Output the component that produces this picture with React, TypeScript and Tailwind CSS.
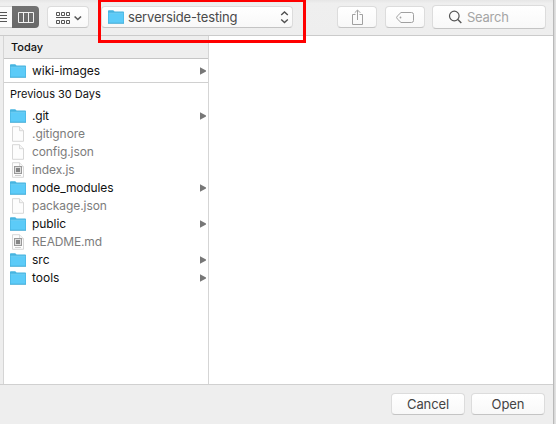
import type { ReactNode } from "react";

type Kind = "folder" | "file" | "doc";

const entries: { name: string; kind: Kind; arrow?: boolean; spacing: string }[] = [
  { name: ".git", kind: "folder", arrow: true, spacing: "tracking-[-0.2px]" },
  { name: ".gitignore", kind: "file", spacing: "tracking-[-0.05px]" },
  { name: "config.json", kind: "file", spacing: "tracking-[-0.1px]" },
  { name: "index.js", kind: "doc", spacing: "tracking-[-0.1px]" },
  { name: "node_modules", kind: "folder", arrow: true, spacing: "tracking-[-0.12px]" },
  { name: "package.json", kind: "file", spacing: "tracking-[-0.08px]" },
  { name: "public", kind: "folder", arrow: true, spacing: "tracking-[-0.08px]" },
  { name: "README.md", kind: "doc", spacing: "tracking-[-0.15px]" },
  { name: "src", kind: "folder", arrow: true, spacing: "tracking-normal" },
  { name: "tools", kind: "folder", arrow: true, spacing: "tracking-normal" },
];

function FolderIcon() {
  return (
    <svg width="16" height="14" viewBox="0 0 16 14" className="block shrink-0">
      <path d="M0 1Q0 .2 .8 .2H5.2L6.6 1.6H15.2Q16 1.6 16 2.4V13.6H0Z" fill="#46b4e0" />
      <path d="M.6 3.6H15.4V12.9H.6Z" fill="#5ccbf8" />
      <path d="M.6 3.2H15.4" stroke="#7fd8fb" strokeWidth=".8" />
      <path d="M0 13.3H16" stroke="#3da7d2" strokeWidth=".7" />
    </svg>
  );
}

function FileIcon({ doc }: { doc?: boolean }) {
  return (
    <svg width="16" height="16" viewBox="0 0 16 16" className="block shrink-0">
      <path d="M2.5 .7H9.5L13.5 4.7V15.3H2.5Z" fill="#fdfdfd" stroke="#d2d2d2" strokeWidth=".9" />
      <path d="M9.5 .7V4.7H13.5" fill="#f5f5f5" stroke="#d2d2d2" strokeWidth=".8" />
      {doc && (
        <>
          <rect x="4.5" y="4.5" width="7" height="7" fill="#dedede" stroke="#999" />
          <rect x="6" y="6" width="4" height="4" fill="#858585" />
          <path d="M5 13.5H11" stroke="#cfcfcf" />
        </>
      )}
    </svg>
  );
}

function Row({ name, kind, arrow, spacing }: { name: string; kind: Kind; arrow?: boolean; spacing: string }) {
  return (
    <div className="flex h-[18px] items-center pr-[2px] pl-[6px]">
      {kind === "folder" ? <FolderIcon /> : <FileIcon doc={kind === "doc"} />}
      <span className={`ml-[6px] flex-1 text-[12px] leading-[18px] ${spacing} ${kind === "folder" ? "text-[#111]" : "text-[#7c7c7c]"}`}>
        {name}
      </span>
      {arrow && (
        <svg width="6" height="8" viewBox="0 0 6 8" className="block">
          <path d="M0 .2L6 3.6V4.4L0 7.8Z" fill="#777" />
        </svg>
      )}
    </div>
  );
}

function Button({ className, children }: { className: string; children: ReactNode }) {
  return (
    <div
      className={`flex shrink-0 items-center rounded-[4px] border border-[#dcdcdc] border-b-[#c4c4c4] bg-linear-to-b from-white to-[#f8f8f8] ${className}`}
    >
      {children}
    </div>
  );
}

export default function App() {
  return (
    <div className="relative flex h-[424px] w-[556px] overflow-hidden bg-[#e0e0e0] font-['Inter','Liberation_Sans',sans-serif] text-[#111]">
      <div className="flex w-[553px] flex-col bg-[#eee]">
        <header className="flex h-[36px] shrink-0 items-start border-b border-[#cbcbcb] bg-linear-to-b from-[#e6e6e6] from-0% via-[#efefef] via-10% to-[#eee] pt-[6px]">
          <div className="flex h-[22px] w-[39px] overflow-hidden rounded-r-[4px]">
            <div className="flex w-[12px] items-center border-y border-[#dcdcdc] border-b-[#c4c4c4] bg-[#fbfbfb]">
              <svg width="8" height="12" viewBox="0 0 8 12">
                <path d="M0 1.5H7M0 4.5H7M0 7.5H7M0 10.5H7" stroke="#555" />
              </svg>
            </div>
            <div className="flex flex-1 items-center bg-linear-to-b from-[#727272] to-[#686868] pl-[6px]">
              <svg width="16" height="11" viewBox="0 0 16 11">
                <path d="M.5 .5H15.5V10.5H.5ZM5.5 .5V10.5M10.5 .5V10.5" fill="none" stroke="#f2f2f2" />
              </svg>
            </div>
          </div>
          <Button className="ml-[8px] h-[22px] w-[42px] pl-[8px]">
            <svg width="27" height="13" viewBox="0 0 27 13">
              <path
                d="M.5 1.5H3.5V4.5H.5ZM5.5 1.5H8.5V4.5H5.5ZM10.5 1.5H13.5V4.5H10.5ZM.5 9.5H3.5V12.5H.5ZM5.5 9.5H8.5V12.5H5.5ZM10.5 9.5H13.5V12.5H10.5ZM0 6.5H14"
                fill="none"
                stroke="#555"
              />
              <path d="M18.6 5.5L21.8 8.5L25 5.5" fill="none" stroke="#555" strokeWidth="1.6" />
            </svg>
          </Button>
          <Button className="ml-[12px] h-[22px] w-[192px] pr-[3px] pl-[6px]">
            <FolderIcon />
            <span className="ml-[4px] flex-1 pt-px text-[13px] tracking-[-0.16px] text-[#4a4a4a]">serverside-testing</span>
            <svg width="9" height="14" viewBox="0 0 9 14">
              <path d="M1.2 5L4.5 2L7.8 5M1.2 9.5L4.5 12.5L7.8 9.5" fill="none" stroke="#505050" strokeWidth="1.4" />
            </svg>
          </Button>
          <Button className="ml-[44px] h-[22px] w-[40px] justify-center">
            <svg width="13" height="17" viewBox="0 0 13 17">
              <path d="M4.5 5.5H1.5V15.5H11.5V5.5H8.5M6.5 11V1.2M3.7 3.8L6.5 1L9.3 3.8" fill="none" stroke="#a0a0a0" />
            </svg>
          </Button>
          <Button className="ml-[8px] h-[22px] w-[40px] justify-center">
            <svg width="18" height="11" viewBox="0 0 18 11">
              <path d="M5 .5H15.5Q17.5 .5 17.5 2.5V8.5Q17.5 10.5 15.5 10.5H5L1.2 6.8Q0 5.5 1.2 4.2Z" fill="none" stroke="#a0a0a0" />
              <circle cx="4.5" cy="5.5" r=".9" fill="#a0a0a0" />
            </svg>
          </Button>
          <Button className="-mt-px ml-[7px] h-[24px] w-[114px] pl-[15px]">
            <svg width="14" height="14" viewBox="0 0 14 14">
              <circle cx="6.3" cy="6" r="4.8" fill="none" stroke="#555" strokeWidth="1.2" />
              <path d="M9.8 9.5L13.3 13" stroke="#555" strokeWidth="1.4" />
            </svg>
            <span className="ml-[5px] pt-px text-[13px] tracking-[-0.25px] text-[#a5a5a5]">Search</span>
          </Button>
        </header>
        <main className="flex h-[348px] shrink-0">
          <div className="w-[4px] border-r border-[#d5d5d5] bg-[#eee]" />
          <section className="w-[205px] border-r border-[#d5d5d5] bg-white">
            <h2 className="h-[23px] border-b border-[#c5c5c5] bg-[#eee] pl-[7px] text-[11px] leading-[23px] font-medium">Today</h2>
            <div className="flex h-[24px] flex-col justify-center border-b border-[#d0d0d0]">
              <Row name="wiki-images" kind="folder" arrow spacing="tracking-[-0.05px]" />
            </div>
            <h2 className="h-[24px] pl-[6px] text-[11px] leading-[23px]">Previous 30 Days</h2>
            {entries.map((entry) => (
              <Row key={entry.name} {...entry} />
            ))}
          </section>
          <section className="flex-1 bg-white" />
        </main>
        <footer className="flex flex-1 items-start justify-end gap-[6px] border-t border-[#d0d0d0] bg-[#eee] pt-[8px] pr-[8px] text-[13px] tracking-[-0.1px] text-[#444]">
          <Button className="h-[22px] w-[74px] justify-center pt-[2px]">Cancel</Button>
          <Button className="h-[22px] w-[74px] justify-center pt-[2px]">Open</Button>
        </footer>
      </div>
      <div className="w-[3px] border-l border-[#b9b9b9] bg-linear-to-r from-[#d4d4d4] to-[#e6e6e6]" />
      <div className="absolute -top-px left-[98px] h-[44px] w-[208px] border-3 border-[#ff0000]" />
    </div>
  );
}
